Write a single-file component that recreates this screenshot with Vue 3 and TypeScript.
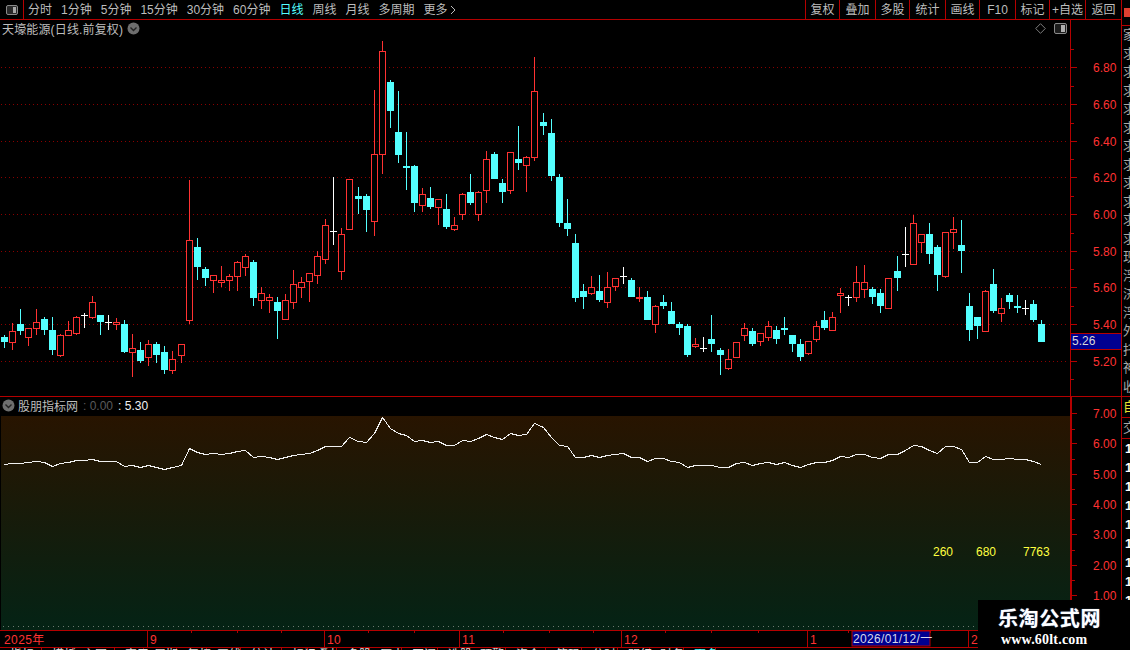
<script setup lang="ts">
type Raw = [string, number, number, number, number]

const raw: Raw[] = [
  ['c',335,337,342,348],['r',323,331,343,350],['c',309,324,331,335],['r',328,328,338,346],['r',309,322,329,335],
  ['c',317,319,330,335],['c',317,330,350,355],['r',334,335,356,357],['r',321,330,336,336],['r',316,317,334,335],
  ['w',313,315,315,328],['r',296,302,318,319],['c',315,315,322,335],['w',315,322,322,330],['r',318,322,325,330],
  ['c',320,324,352,353],['r',334,348,353,377],['c',342,350,361,363],['r',340,344,358,366],['c',342,344,355,363],
  ['c',346,352,370,374],['r',351,359,371,374],['r',344,344,356,363],['r',180,240,321,324],['c',238,247,267,280],
  ['c',267,269,278,286],['r',275,275,281,293],['r',266,280,283,287],['r',274,276,281,291],['r',261,262,277,291],
  ['r',254,256,268,276],['c',260,262,298,306],['r',287,293,301,309],['r',294,297,301,313],['c',297,302,311,339],
  ['r',294,300,320,320],['r',270,284,303,309],['r',277,282,288,298],['r',273,273,282,302],['r',251,256,276,284],
  ['r',219,225,260,264],['w',177,231,231,245],['r',228,234,272,280],['r',179,179,230,230],['c',187,196,199,214],
  ['c',194,196,210,232],['r',90,154,222,236],['r',41,51,155,174],['c',80,82,111,128],['c',91,132,155,163],
  ['c',132,166,168,190],['c',165,166,203,212],['r',188,194,206,212],['c',187,198,207,209],['r',199,199,208,225],
  ['c',194,209,227,229],['r',217,225,230,231],['r',193,194,215,220],['c',174,192,203,205],['r',191,192,215,221],
  ['r',151,159,191,203],['c',152,154,179,179],['c',179,183,192,203],['r',152,152,191,194],['c',126,159,163,170],
  ['r',156,157,166,192],['r',57,91,158,161],['c',113,122,126,135],['c',119,133,176,181],['c',174,177,223,227],
  ['c',199,223,229,236],['c',234,243,298,302],['c',284,291,297,309],['r',276,287,294,295],['c',275,291,300,302],
  ['r',272,287,303,308],['r',278,278,287,291],['w',267,276,276,284],['c',278,280,297,297],['f',287,297,299,302],
  ['c',291,297,320,320],['r',305,306,325,333],['c',295,302,306,309],['c',302,311,324,324],['c',322,324,328,335],
  ['c',324,326,355,357],['r',338,344,347,348],['w',337,348,348,352],['c',315,339,344,352],['c',348,350,355,375],
  ['r',349,359,369,370],['r',342,342,358,358],['r',323,328,336,341],['c',328,331,344,346],['r',333,333,342,346],
  ['r',321,326,338,341],['c',326,330,339,344],['c',317,328,330,335],['c',335,335,344,352],['c',339,344,357,361],
  ['r',341,341,354,355],['r',321,326,340,342],['c',311,320,328,330],['r',312,317,331,331],['r',288,293,296,313],
  ['w',295,297,297,306],['r',266,282,298,302],['r',265,282,290,298],['c',287,289,297,304],['c',289,293,306,313],
  ['r',278,278,309,309],['c',256,271,278,291],['w',227,254,254,267],['r',215,223,265,265],['r',234,234,243,253],
  ['c',223,234,254,264],['c',245,247,275,291],['r',232,232,277,278],['r',217,229,233,249],['c',220,245,251,273],
  ['c',293,306,330,341],['c',317,317,326,339],['r',290,291,332,332],['c',269,284,311,313],['r',298,308,314,322],
  ['c',293,295,302,309],['c',295,306,308,313],['w',300,308,308,315],['c',300,304,320,322],['c',320,324,342,342],
]

const lineV: number[] = [
  193,190,189,186,184,187,199,190,186,181,181,176,184,184,184,199,196,202,196,201,208,202,196,143,157,163,160,163,160,154,
  151,172,169,172,178,170,165,162,160,151,137,139,139,112,124,127,98,50,84,100,105,124,121,127,124,136,136,121,123,115,
  103,112,118,100,106,103,70,82,112,136,139,172,172,166,172,166,163,160,172,172,184,175,175,184,187,202,196,196,196,202,
  202,190,187,196,190,187,193,187,196,202,193,187,187,181,169,172,163,163,172,175,163,163,151,136,139,151,160,139,139,148,
  187,187,169,178,178,175,178,178,184,193,
]

const xAt = (i: number): number => 4 + 8 * i + Math.floor(i / 22.3 + 0.03)

const candles = raw.map((r, i) => ({ kind: r[0], x: xAt(i), top: r[1], open: r[2], close: r[3], bottom: r[4] }))
const linePoints = lineV.map((v, i) => `${xAt(i) + 0.5},${Math.round(400 + v / 3) + 0.5}`).join(' ')

const tabs = ['分时', '1分钟', '5分钟', '15分钟', '30分钟', '60分钟', '日线', '周线', '月线', '多周期', '更多']
const actions = ['复权', '叠加', '多股', '统计', '画线', 'F10', '标记', '+自选', '返回']

const priceGrid = [
  { y: 67, t: '6.80' }, { y: 104, t: '6.60' }, { y: 141, t: '6.40' }, { y: 177, t: '6.20' }, { y: 214, t: '6.00' },
  { y: 251, t: '5.80' }, { y: 287, t: '5.60' }, { y: 324, t: '5.40' }, { y: 361, t: '5.20' },
]
const priceMinor = [49, 86, 123, 159, 196, 233, 269, 306, 343, 379]
const subTicks = [
  { y: 413, t: '7.00' }, { y: 443, t: '6.00' }, { y: 474, t: '5.00' }, { y: 504, t: '4.00' },
  { y: 534, t: '3.00' }, { y: 565, t: '2.00' }, { y: 595, t: '1.00' },
]
const subMinor = [429, 459, 489, 519, 550, 580, 611]

const monthLines = [147, 324, 459, 621, 807, 968]
const minorTicks = [191, 237, 281, 368, 414, 503, 549, 593, 665, 711, 758, 848, 890, 930]
const monthLabels = [
  { x: 4, t: '2025年' }, { x: 150, t: '9' }, { x: 327, t: '10' }, { x: 462, t: '11' },
  { x: 624, t: '12' }, { x: 810, t: '1' }, { x: 971, t: '2' },
]

const bottomTabs = [
  { w: 42, t: '指标' }, { w: 31, t: '模板' }, { w: 42, t: '主图' }, { w: 29, t: '窗口' }, { w: 33, t: '周期' },
  { w: 30, t: '复权' }, { w: 34, t: '画线' }, { w: 41, t: '统计' }, { w: 26, t: '标记' }, { w: 29, t: '叠加' },
  { w: 33, t: '多股' }, { w: 32, t: '历史' }, { w: 36, t: '区间' }, { w: 32, t: '选股' }, { w: 36, t: '预警' },
  { w: 40, t: '资金' }, { w: 36, t: '筹码' }, { w: 36, t: '分时' }, { w: 32, t: '明细' }, { w: 34, t: '财务' },
  { w: 32, t: '更多', hot: true },
]

const sideTop = ['家', '求', '求', '求', '求', '求', '求', '求', '求', '求', '求', '求', '现', '浮', '济', '浮', '外', '托', '神', '收']
const sideNums = ['1', '1', '1', '1', '1', '1', '1', '1', '1']
</script>

<template>
  <div class="app">
    <div class="main">
      <header class="toolbar">
        <div class="layout-btn">
          <svg width="14" height="12" viewBox="0 0 14 12" class="toggle">
            <rect x="1.5" y="1.5" width="11" height="9" rx="1.5" fill="#2a2a2a" stroke="#8a8a8a" />
            <rect x="8" y="3" width="3" height="6" fill="#a8a8a8" />
          </svg>
        </div>
        <nav class="tabs">
          <span v-for="t in tabs" :key="t" class="tab" :class="{ on: t === '日线' }">{{ t }}</span>
          <svg class="more" width="6" height="10" viewBox="0 0 6 10">
            <path d="M1 1l4 4-4 4" fill="none" stroke="#bdbdbd" />
          </svg>
        </nav>
        <div class="actions">
          <span v-for="a in actions" :key="a" class="action">{{ a }}</span>
        </div>
      </header>

      <section class="price-panel">
        <div class="plot">
          <div class="legend top-legend">
            <span class="stock wide">天壕能源(日线.前复权)</span>
            <svg class="chev" width="13" height="13" viewBox="0 0 13 13">
              <circle cx="6.5" cy="6.5" r="6" fill="#6e6e6e" />
              <path d="M3.5 5.5l3 3 3-3" fill="none" stroke="#222" stroke-width="1.4" />
            </svg>
            <span class="legend-fill"></span>
            <svg width="11" height="11" viewBox="0 0 11 11">
              <path d="M5.5 .7L10.3 5.5 5.5 10.3 .7 5.5Z" fill="none" stroke="#7d7d7d" />
            </svg>
            <svg class="toggle-r" width="13" height="11" viewBox="0 0 13 11">
              <rect x=".5" y=".5" width="12" height="10" rx="1.5" fill="#1c1c1c" stroke="#8a8a8a" />
              <rect x="7" y="2" width="4" height="7" fill="#b0b0b0" />
            </svg>
          </div>
          <svg class="chart" width="1070" height="356" viewBox="0 40 1070 356">
            <line v-for="g in priceGrid" :key="g.y" x1="1" x2="1066" :y1="g.y + 0.5" :y2="g.y + 0.5"
              stroke="#8a0000" stroke-dasharray="1 3" />
            <g v-for="c in candles" :key="c.x" shape-rendering="crispEdges">
              <template v-if="c.kind === 'c'">
                <rect :x="c.x" :y="c.top" width="1" :height="c.bottom - c.top" fill="#54ffff" />
                <rect :x="c.x - 3" :y="c.open" width="7" :height="c.close - c.open" fill="#54ffff" />
              </template>
              <template v-else-if="c.kind === 'w'">
                <rect :x="c.x" :y="c.top" width="1" :height="c.bottom - c.top" fill="#fff" />
                <rect :x="c.x - 3" :y="c.open" width="7" height="1" fill="#fff" />
              </template>
              <template v-else-if="c.kind === 'f'">
                <rect :x="c.x" :y="c.top" width="1" :height="c.bottom - c.top" fill="#ff3232" />
                <rect :x="c.x - 3" :y="c.open" width="7" :height="c.close - c.open" fill="#ff3232" />
              </template>
              <template v-else>
                <rect :x="c.x" :y="c.top" width="1" :height="c.bottom - c.top" fill="#ff3232" />
                <rect :x="c.x - 2.5" :y="c.open + 0.5" width="6" :height="c.close - c.open - 1" fill="#000"
                  stroke="#ff3232" />
              </template>
            </g>
          </svg>
        </div>
        <div class="axis">
          <svg width="50" height="376" viewBox="1071 20 50 376">
            <rect v-for="y in priceMinor" :key="y" x="1071" :y="y" width="3" height="1" fill="#b40000" />
            <g v-for="g in priceGrid" :key="g.y">
              <rect x="1071" :y="g.y" width="6" height="1" fill="#b40000" />
              <text class="num" x="1093" :y="g.y + 5">{{ g.t }}</text>
            </g>
          </svg>
          <div class="last-price">5.26</div>
        </div>
      </section>

      <section class="sub-panel">
        <div class="plot">
          <div class="legend sub-legend">
            <svg class="chev-sub" width="13" height="13" viewBox="0 0 13 13">
              <circle cx="6.5" cy="6.5" r="6" fill="#6e6e6e" />
              <path d="M3.5 5.5l3 3 3-3" fill="none" stroke="#222" stroke-width="1.4" />
            </svg>
            <span class="stock">股朋指标网</span>
            <span class="dim">: 0.00</span>
            <span class="bright">: 5.30</span>
          </div>
          <svg class="sub-chart" width="1069" height="214" viewBox="1 416 1069 214">
            <polyline :points="linePoints" fill="none" stroke="#f0f0f0" shape-rendering="crispEdges" />
            <line x1="3" x2="1069" y1="626.5" y2="626.5" stroke="#6c7a70" stroke-dasharray="1 4" />
            <text class="yellow" x="933" y="556">260</text>
            <text class="yellow" x="976" y="556">680</text>
            <text class="yellow" x="1023" y="556">7763</text>
          </svg>
        </div>
        <div class="axis sub-axis">
          <svg width="49" height="233" viewBox="1072 397 49 233">
            <rect v-for="y in subMinor" :key="y" x="1072" :y="y" width="3" height="1" fill="#b40000" />
            <g v-for="g in subTicks" :key="g.y">
              <rect x="1072" :y="g.y" width="5" height="1" fill="#b40000" />
              <text class="num" x="1093" :y="g.y + 5">{{ g.t }}</text>
            </g>
          </svg>
        </div>
      </section>

      <svg class="time-axis" width="1121" height="16" viewBox="0 631 1121 16">
        <rect v-for="x in monthLines" :key="x" :x="x" y="631" width="1" height="16" fill="#b40000" />
        <rect v-for="x in minorTicks" :key="x" :x="x" y="631" width="1" height="2" fill="#b40000" />
        <text v-for="m in monthLabels" :key="m.x" class="num date" :x="m.x" y="644">{{ m.t }}</text>
        <rect x="852" y="631" width="78" height="15" fill="#000090" stroke="#b40000" />
        <text class="date-hot" x="853" y="643">2026/01/12/一</text>
      </svg>

      <footer class="bottom-tabs">
        <span v-for="b in bottomTabs" :key="b.t" class="bottom-tab" :class="{ hot: b.hot }"
          :style="{ width: b.w + 'px' }">{{ b.t }}</span>
      </footer>
    </div>

    <aside class="side">
      <div class="side-flag"></div>
      <div class="side-top">
        <span v-for="(t, i) in sideTop" :key="i" class="side-row">{{ t }}</span>
      </div>
      <div class="side-bottom">
        <span class="side-row self">自</span>
        <span class="side-row trade">交</span>
        <span v-for="(n, i) in sideNums" :key="i" class="side-row one">{{ n }}</span>
      </div>
    </aside>

    <div class="watermark">
      <div class="wm-title">乐淘公式网</div>
      <div class="wm-url">www.60lt.com</div>
    </div>
  </div>
</template>

<style>
html, body { margin: 0; background: #000; overflow: hidden; }
</style>

<style scoped>
.app {
  position: relative;
  display: flex;
  width: 1130px;
  height: 650px;
  overflow: hidden;
  background: #000;
  color: #bdbdbd;
  font: 12px "Liberation Sans", "Noto Sans CJK SC", sans-serif;
}
.main { display: flex; flex-direction: column; width: 1121px; flex: none; }
.toolbar {
  display: flex;
  height: 19px;
  flex: none;
  border-bottom: 1px solid #b40000;
  line-height: 20px;
}
.layout-btn {
  width: 23px;
  border-right: 1px solid #b40000;
  display: flex;
  align-items: center;
  justify-content: center;
}
.tabs { display: flex; align-items: center; gap: 9px; padding-left: 4px; flex: 1; }
.tab { white-space: nowrap; }
.tab.on { color: #54ffff; }
.more { margin-left: -7px; }
.actions { display: grid; grid-template-columns: 34px 36px 34px 36px 34px 36px 34px 36px 36px; }
.action { border-left: 1px solid #b40000; text-align: center; white-space: nowrap; }
.price-panel { display: flex; height: 376px; flex: none; }
.plot { width: 1070px; flex: none; display: flex; flex-direction: column; }
.legend {
  display: flex;
  align-items: center;
  height: 20px;
  flex: none;
  padding: 0 3px 0 2px;
}
.top-legend { box-sizing: border-box; padding-bottom: 3px; }
.wide { letter-spacing: .15px; }
.chev { margin-left: 4px; }
.legend-fill { flex: 1; }
.toggle-r { margin-left: 8px; }
.chart, .sub-chart, .time-axis { display: block; flex: none; }
.axis { position: relative; width: 51px; flex: none; border-left: 1px solid #b40000; box-sizing: border-box; }
.axis svg { display: block; }
.num { fill: #ff3232; font-size: 12px; }
.date { letter-spacing: .4px; }
.last-price {
  position: absolute;
  left: 0;
  top: 313px;
  width: 50px;
  height: 15px;
  box-sizing: content-box;
  background: #000090;
  border-top: 1px solid #b40000;
  border-bottom: 1px solid #b40000;
  color: #d8d8d8;
  line-height: 15px;
  padding-left: 1px;
  margin-right: -1px;
}
.sub-panel {
  display: flex;
  height: 234px;
  flex: none;
  box-sizing: border-box;
  border-top: 1px solid #b40000;
  border-bottom: 0;
}
.sub-legend { box-sizing: border-box; height: 19px; padding: 0 0 2px 2px; }
.chev-sub { margin-right: 3px; }
.dim { color: #5a5a5a; margin-left: 5px; }
.bright { color: #f0f0f0; margin-left: 5px; }
.sub-chart {
  margin-left: 1px;
  background: linear-gradient(to bottom, #281400, #042315);
}
.yellow { fill: #ffff40; font-size: 12px; }
.sub-axis { border-left: 2px solid #b40000; }
.time-axis { border-top: 1px solid #b40000; border-bottom: 1px solid #b40000; }
.date-hot { fill: #d8d8e8; font-size: 12px; letter-spacing: .35px; }
.bottom-tabs { display: flex; height: 3px; overflow: hidden; flex: none; margin-top: 0; }
.bottom-tab {
  flex: none;
  box-sizing: border-box;
  border-right: 1px solid #b40000;
  padding-left: 10px;
  line-height: 15px;
  height: 3px;
  color: #e0e0e0;
  white-space: nowrap;
}
.bottom-tab.hot { color: #54ffff; }
.side {
  position: relative;
  width: 9px;
  flex: none;
  box-sizing: border-box;
  border-left: 1px solid #b40000;
  display: flex;
  flex-direction: column;
  overflow: hidden;
  padding-top: 25px;
}
.side-flag { position: absolute; left: 2px; top: 8px; width: 7px; height: 9px; background: #e04030; }
.side-top {
  height: 372px;
  display: flex;
  flex-direction: column;
  flex: none;
  border-top: 1px solid #b40000;
  border-bottom: 1px solid #b40000;
  box-sizing: border-box;
  overflow: hidden;
}
.side-row {
  display: block;
  height: 20px;
  line-height: 20px;
  flex: none;
  padding-left: 1px;
  font-size: 13px;
  white-space: nowrap;
  color: #a8a8a8;
}
.side-top .side-row { height: 18.5px; line-height: 18.5px; }
.side-bottom { display: flex; flex-direction: column; }
.self { color: #e8e030; border-bottom: 1px solid #b40000; }
.trade { border-bottom: 1px solid #b40000; }
.one { color: #fff; font-weight: 700; font-size: 13px; height: 19px; line-height: 19px; padding-left: 3px; }
.watermark {
  position: absolute;
  right: 0;
  bottom: 0;
  width: 152px;
  height: 50px;
  background: #000;
  color: #fff;
}
.wm-title {
  font: 700 20px/24px "Noto Sans CJK SC", sans-serif;
  letter-spacing: .6px;
  margin-top: 6px;
  padding-left: 20px;
  text-shadow: 0 0 1px #7aa0d8;
}
.wm-url { font: 700 14px/17px "Liberation Serif", serif; letter-spacing: .2px; padding: 1px 0 0 23px; }
</style>
